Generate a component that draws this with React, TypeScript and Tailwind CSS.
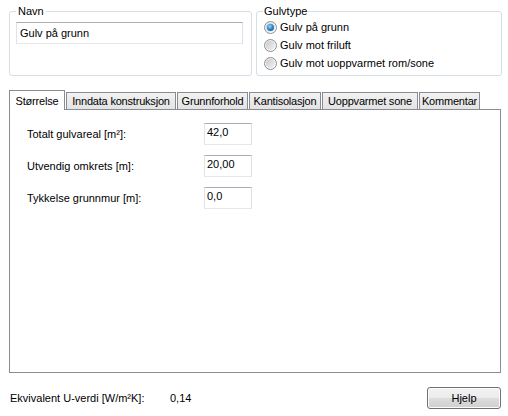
import React from "react";

const font = { fontFamily: '"Liberation Sans", Arial, sans-serif' };

function Radio({ checked, label }: { checked?: boolean; label: string }) {
  return (
    <div className="flex items-center h-[18px]">
      <div className="w-[13px] h-[13px] rounded-full border border-[#8e8f8f] bg-gradient-to-br from-[#e6e6e6] to-[#ffffff] flex items-center justify-center shrink-0">
        <div className="w-[9px] h-[9px] rounded-full bg-gradient-to-br from-[#c8c8c8] to-[#f4f4f4] flex items-center justify-center">
          {checked && (
            <div className="w-[7px] h-[7px] rounded-full bg-[radial-gradient(circle_at_40%_35%,#a5d9f5_0%,#2a8ad4_45%,#0a4a8a_100%)]" />
          )}
        </div>
      </div>
      <span className="ml-[3px] text-[11px] text-black leading-none">{label}</span>
    </div>
  );
}

function Tab({ label, w, selected }: { label: string; w: number; selected?: boolean }) {
  if (selected) {
    return (
      <div
        className="relative z-10 -mb-px h-[20px] border border-b-0 border-[#898c95] bg-white flex items-start justify-center pt-[2px] text-[11px] tracking-[-0.2px] text-black"
        style={{ width: w }}
      >
        {label}
      </div>
    );
  }
  return (
    <div
      className="h-[17px] ml-px border border-b-0 border-[#898c95] bg-gradient-to-b from-[#f2f2f2] to-[#e3e3e3] flex items-center justify-center text-[11px] tracking-[-0.2px] text-black"
      style={{ width: w }}
    >
      {label}
    </div>
  );
}

function Field({ label, value }: { label: string; value: string }) {
  return (
    <div className="flex items-center h-[22px]">
      <span className="w-[177px] text-[11px] text-black">{label}</span>
      <div className="w-[48px] h-[22px] border border-[#abadb3] border-b-[#e3e9ef] border-l-[#e2e3ea] border-r-[#dbdfe6] bg-white text-[11px] text-black pl-[2px] pt-[3px] leading-none">
        {value}
      </div>
    </div>
  );
}

export default function App() {
  return (
    <div className="w-[508px] h-[416px] bg-white relative overflow-hidden" style={font}>
      <div className="flex pt-[4px] pl-[9px] gap-[4px]">
        <fieldset className="w-[243px] h-[72px] border border-[#d5dfe5] rounded-[3px] m-0 p-0">
          <legend className="ml-[6px] px-[2px] text-[11px] leading-[14px] text-black">Navn</legend>
          <div className="ml-[6px] mt-[4px] w-[227px] h-[22px] border border-[#abadb3] border-b-[#e3e9ef] border-l-[#e2e3ea] border-r-[#dbdfe6] text-[11px] pl-[3px] flex items-center">
            Gulv på grunn
          </div>
        </fieldset>
        <fieldset className="w-[246px] h-[72px] border border-[#d5dfe5] rounded-[3px] m-0 p-0">
          <legend className="ml-[6px] px-[1px] text-[11px] leading-[14px] text-black">Gulvtype</legend>
          <div className="ml-[7px] mt-0 flex flex-col">
            <Radio checked label="Gulv på grunn" />
            <Radio label="Gulv mot friluft" />
            <Radio label="Gulv mot uoppvarmet rom/sone" />
          </div>
        </fieldset>
      </div>

      <div className="mt-[14px] ml-[9px] w-[492px]">
        <div className="flex items-end">
          <Tab selected label="Størrelse" w={56} />
          <Tab label="Inndata konstruksjon" w={110} />
          <Tab label="Grunnforhold" w={71} />
          <Tab label="Kantisolasjon" w={72} />
          <Tab label="Uoppvarmet sone" w={96} />
          <Tab label="Kommentar" w={61} />
        </div>
        <div className="h-[264px] border border-[#898c95] bg-white pl-[17px] pt-[13px] flex flex-col gap-[10px]">
          <Field label="Totalt gulvareal [m²]:" value="42,0" />
          <Field label="Utvendig omkrets [m]:" value="20,00" />
          <Field label="Tykkelse grunnmur [m]:" value="0,0" />
        </div>
      </div>

      <div className="flex items-center mt-[14px] ml-[10px]">
        <span className="w-[160px] text-[11px] text-black">Ekvivalent U-verdi [W/m²K]:</span>
        <span className="text-[11px] text-black">0,14</span>
        <button className="ml-auto mr-[7px] w-[74px] h-[22px] rounded-[3px] border border-[#707070] bg-[linear-gradient(to_bottom,#f2f2f2_0%,#ebebeb_50%,#dddddd_51%,#cfcfcf_100%)] text-[11px] text-black shadow-[inset_0_0_0_1px_#fcfcfc]">
          Hjelp
        </button>
      </div>
    </div>
  );
}
